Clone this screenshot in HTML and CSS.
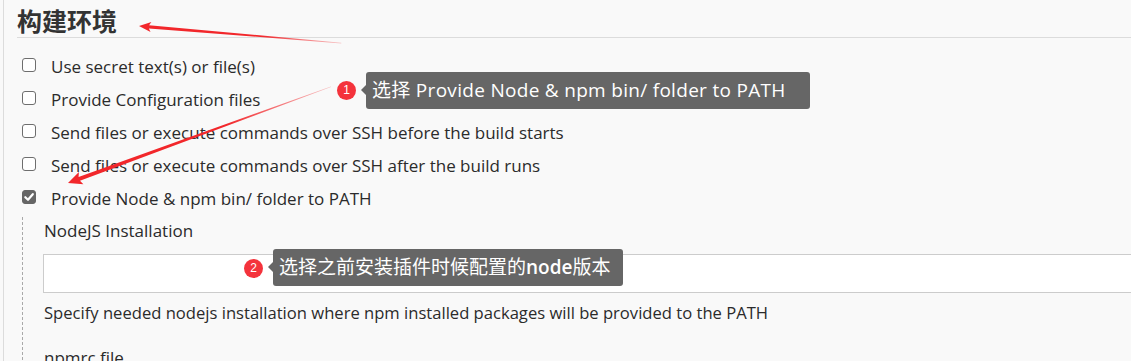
FILE: index.html
```html
<!DOCTYPE html>
<html lang="zh">
<head>
<meta charset="utf-8">
<link rel="stylesheet" href="styles.css">
</head>
<body>
<div class="page">
  <h2 class="heading">构建环境</h2>
  <div class="options">
    <label class="row"><span class="box"></span><span class="label-text">Use secret text(s) or file(s)</span></label>
    <label class="row"><span class="box"></span><span class="label-text">Provide Configuration files</span></label>
    <label class="row"><span class="box"></span><span class="label-text">Send files or execute commands over SSH before the build starts</span></label>
    <label class="row"><span class="box"></span><span class="label-text">Send files or execute commands over SSH after the build runs</span></label>
    <label class="row"><span class="box checked"><svg viewBox="0 0 14 14" width="14" height="14"><path d="M3.3 7.2 L6 9.8 L10.8 4.2" fill="none" stroke="#fff" stroke-width="2.2" stroke-linecap="round" stroke-linejoin="round"/></svg></span><span class="label-text">Provide Node &amp; npm bin/ folder to PATH</span></label>
  </div>
  <div class="nested">
    <div class="field-label">NodeJS Installation</div>
    <div class="select-box"></div>
    <div class="help">Specify needed nodejs installation where npm installed packages will be provided to the PATH</div>
    <div class="field-label npmrc">npmrc file</div>
  </div>
</div>

<svg class="arrows" width="1131" height="361" viewBox="0 0 1131 361">
  <defs>
    <linearGradient id="fade1" gradientUnits="userSpaceOnUse" x1="0" y1="0" x2="203" y2="0">
      <stop offset="0" stop-color="#f2272b"/>
      <stop offset="0.6" stop-color="#f2272b"/>
      <stop offset="1" stop-color="#f2272b" stop-opacity="0.25"/>
    </linearGradient>
    <linearGradient id="fade2" gradientUnits="userSpaceOnUse" x1="0" y1="0" x2="280" y2="0">
      <stop offset="0" stop-color="#f2272b"/>
      <stop offset="0.6" stop-color="#f2272b"/>
      <stop offset="1" stop-color="#f2272b" stop-opacity="0.25"/>
    </linearGradient>
  </defs>
  <g transform="translate(139,26) rotate(4.83)">
    <polygon points="0,0 12,-5 10,-1.6 203,-0.3 203,0.3 10,1.6 12,5" fill="url(#fade1)"/>
  </g>
  <g transform="translate(68,183) rotate(-20.12)">
    <polygon points="0,0 14,-6.5 12,-2 280,-0.3 280,0.3 12,2 14,6.5" fill="url(#fade2)"/>
  </g>
</svg>

<div class="badge badge-1">1</div>
<div class="tip tip-1">选择 Provide Node &amp; npm bin/ folder to PATH</div>
<div class="badge badge-2">2</div>
<div class="tip tip-2">选择之前安装插件时候配置的<b>node</b>版本</div>
</body>
</html>
```
FILE: styles.css
```css
html, body {
  margin: 0;
  padding: 0;
}
body {
  width: 1131px;
  height: 361px;
  overflow: hidden;
  background: #f9f9f9;
  position: relative;
  font-family: "Open Sans", "Noto Sans CJK SC", sans-serif;
  color: #2b2b2b;
}
.page {
  margin-left: 3px;
  border-left: 1px solid #dcdcdc;
  padding-left: 13px;
  min-height: 361px;
}
.heading {
  margin: 0;
  padding: 5px 0 2px 0;
  font-family: "Noto Sans CJK SC", sans-serif;
  font-size: 25px;
  line-height: 30px;
  font-weight: 700;
  color: #333;
  border-bottom: 1px solid #dcdcdc;
}
.options {
  margin-top: 12px;
  display: flex;
  flex-direction: column;
}
.row {
  height: 33px;
  display: flex;
  align-items: center;
  font-size: 17px;
}
.box {
  width: 14px;
  height: 14px;
  box-sizing: border-box;
  border: 1.5px solid #6e6e6e;
  border-radius: 3px;
  background: #fff;
  margin-left: 5px;
  margin-right: 15px;
  margin-top: -3px;
  flex: none;
  display: flex;
}
.box.checked {
  background: #666;
  border-color: #666;
}
.box.checked svg {
  margin: -1.5px;
}
.label-text {
  line-height: 24px;
}
.nested {
  margin-left: 5px;
  border-left: 1.5px dashed #a9a9a9;
  padding-left: 21px;
  padding-top: 2px;
  margin-top: 2px;
}
.field-label {
  font-size: 17px;
  line-height: 24px;
}
.select-box {
  margin-top: 11px;
  margin-left: -1px;
  height: 37px;
  width: 1200px;
  background: #fff;
  border: 1px solid #cccccc;
}
.help {
  margin-top: 8px;
  font-size: 16.6px;
  line-height: 24px;
}
.npmrc {
  margin-top: 21px;
}
.arrows {
  position: absolute;
  left: 0;
  top: 0;
  pointer-events: none;
}
.badge {
  position: absolute;
  width: 19px;
  height: 19px;
  border-radius: 50%;
  background: #f4333c;
  color: #fff;
  font-family: "Liberation Sans", sans-serif;
  font-size: 12px;
  line-height: 19px;
  text-align: center;
}
.badge-1 { left: 337px; top: 81px; }
.badge-2 { left: 244px; top: 259px; }
.tip {
  position: absolute;
  background: #666;
  color: #fff;
  border-radius: 3px;
  height: 37px;
  line-height: 37px;
  font-size: 19px;
  padding: 0 6px;
  box-sizing: border-box;
  white-space: nowrap;
  font-family: "Open Sans", "Noto Sans CJK SC", sans-serif;
}
.tip::before {
  content: "";
  position: absolute;
  left: -5px;
  top: 13px;
  border-top: 5px solid transparent;
  border-bottom: 5px solid transparent;
  border-right: 5px solid #666;
}
.tip b { font-weight: 600; }
.tip-1 { left: 366px; top: 72px; width: 444px; letter-spacing: 0.3px; }
.tip-2 { left: 273px; top: 249px; width: 350px; }
```
